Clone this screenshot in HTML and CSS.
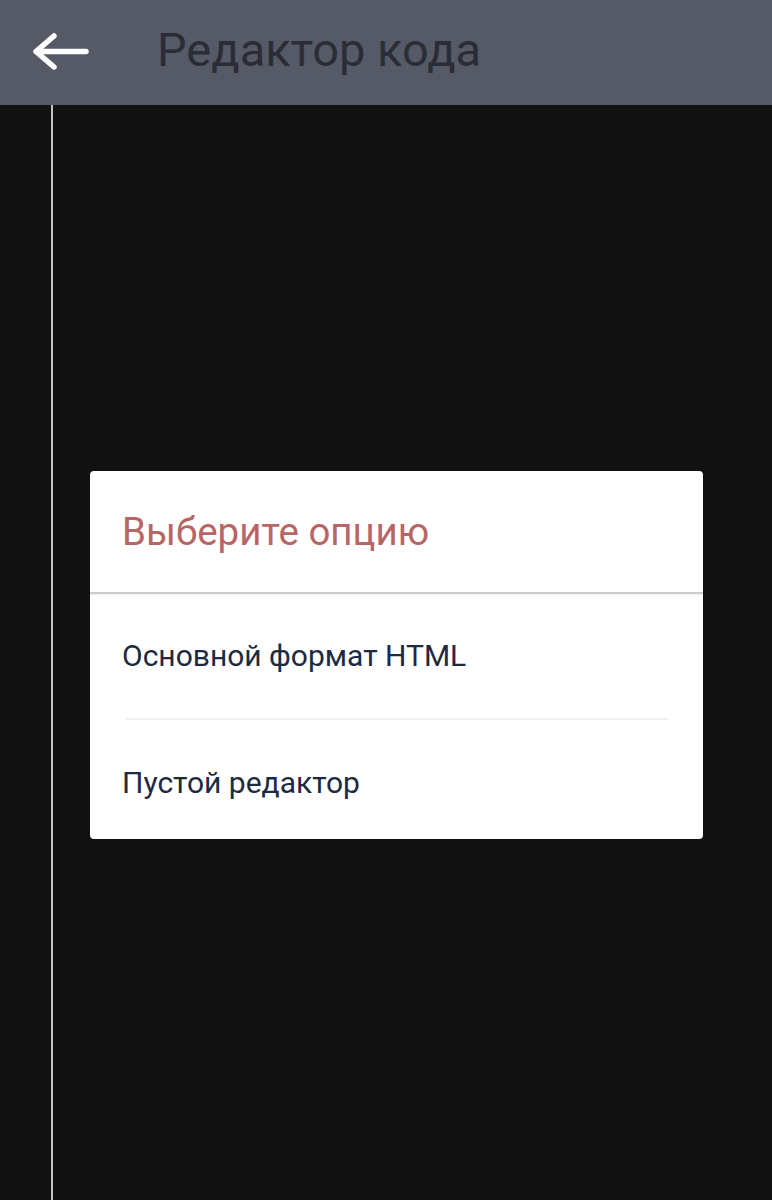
FILE: index.html
```html
<!DOCTYPE html>
<html lang="ru">
<head>
<meta charset="utf-8">
<title>Редактор кода</title>
<link rel="stylesheet" href="styles.css">
</head>
<body>
<header class="appbar">
  <svg class="back" width="60" height="40" viewBox="0 0 60 40">
    <path d="M6 18.5 H56 M24 3 L6 18.5 L24 34" fill="none" stroke="#fff" stroke-width="5.5" stroke-linecap="round" stroke-linejoin="round"/>
  </svg>
  <h1 class="title">Редактор кода</h1>
</header>
<main class="editor">
  <div class="gutter"></div>
  <div class="area">
    <div class="dialog">
      <div class="dialog-title">Выберите опцию</div>
      <div class="dialog-sep"></div>
      <div class="option">Основной формат HTML</div>
      <div class="option-sep"></div>
      <div class="option last">Пустой редактор</div>
    </div>
  </div>
</main>
</body>
</html>
```
FILE: styles.css
```css
* { box-sizing: border-box; }
html, body { margin: 0; padding: 0; }
body {
  width: 772px;
  height: 1200px;
  background: #111111;
  font-family: Roboto, "Noto Sans", sans-serif;
  display: flex;
  flex-direction: column;
  overflow: hidden;
}
.appbar {
  height: 105px;
  background: #555a66;
  display: flex;
  align-items: center;
  padding-left: 30px;
  flex-shrink: 0;
}
.back { display: block; margin-top: 1px; }
.title {
  margin: -6px 0 0 67px;
  font-weight: 400;
  font-size: 47px;
  color: #2a2d35;
}
.editor {
  flex: 1;
  display: flex;
}
.gutter {
  width: 53px;
  border-right: 2px solid #c4c4c4;
  flex-shrink: 0;
}
.area { flex: 1; }
.dialog {
  margin: 366px 0 0 37px;
  width: 613px;
  background: #ffffff;
  border-radius: 4px;
}
.dialog-title {
  height: 121px;
  padding-left: 32px;
  display: flex;
  align-items: center;
  font-size: 38.5px;
  color: #b86565;
}
.dialog-sep {
  height: 2px;
  background: #cccccc;
  box-shadow: 0 1px 2px rgba(0,0,0,0.08);
}
.option {
  height: 124px;
  padding-left: 32px;
  display: flex;
  align-items: center;
  font-size: 30px;
  color: #1c2a42;
  padding-bottom: 1px;
}
.option.last { height: 119px; padding-top: 5px; padding-bottom: 0; }
.option-sep {
  height: 2px;
  margin: 0 35px;
  background: #efefef;
}
```
